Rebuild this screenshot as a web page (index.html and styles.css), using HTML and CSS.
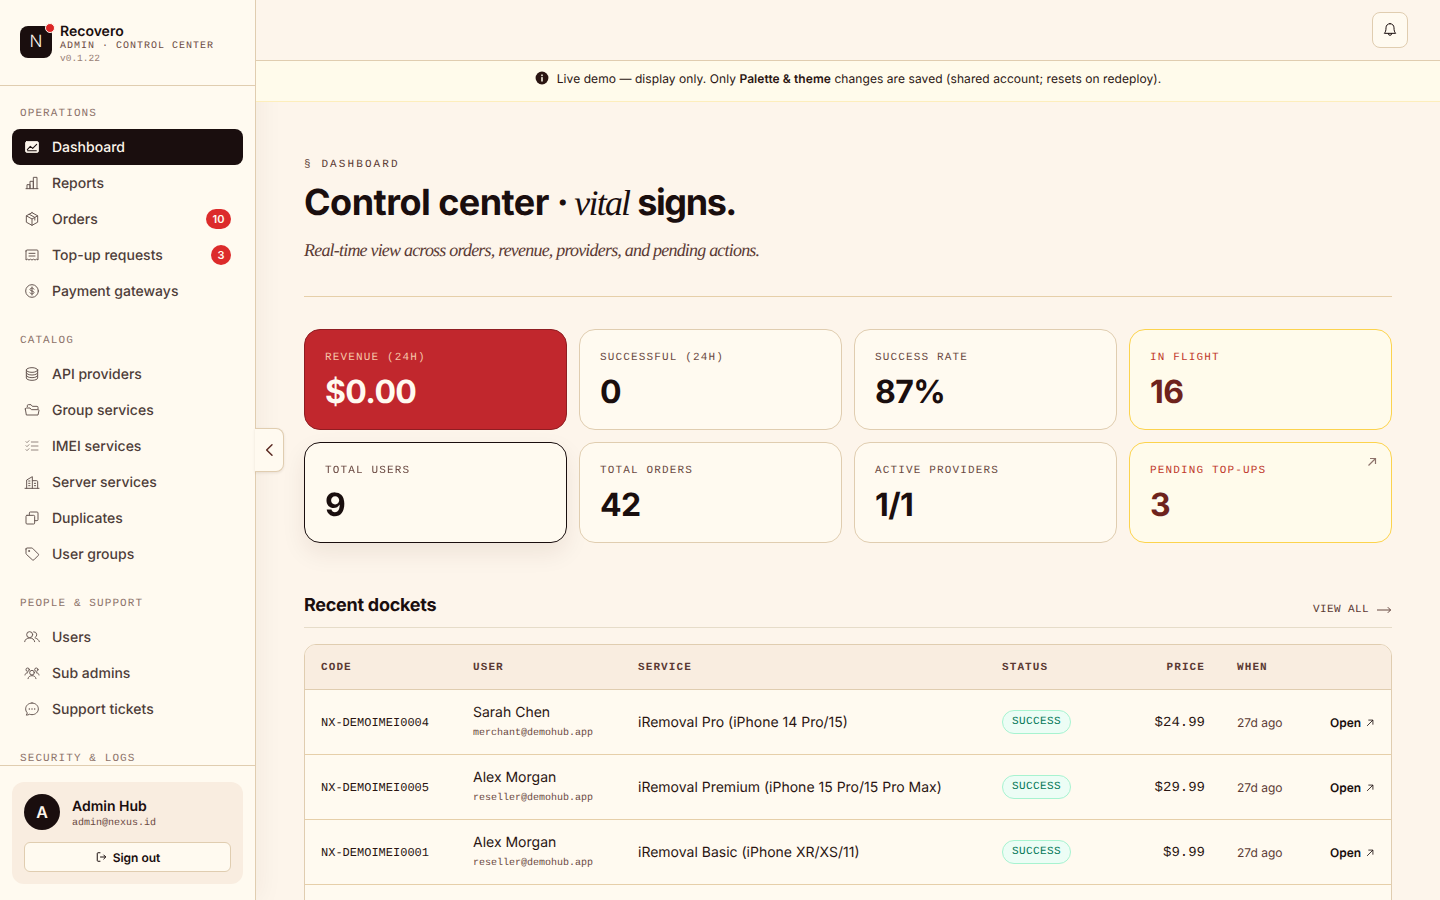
FILE: index.html
```html
<!DOCTYPE html>
<html lang="en">

<head>
    <meta charset="UTF-8">
    <meta name="viewport" content="width=device-width, initial-scale=1.0">
    <title>Recovero Admin</title>
    <link rel="stylesheet" href="styles.css">
</head>

<body>
    <aside class="sidebar">
        <div class="brand">
            <div class="brand_logo">N<span class="brand_dot"></span></div>
            <div class="brand_text">
                <p class="brand_name">Recovero</p>
                <p class="brand_sub">ADMIN · CONTROL CENTER</p>
                <p class="brand_ver">v0.1.22</p>
            </div>
        </div>

        <nav class="nav">
            <p class="nav_label">OPERATIONS</p>
            <a class="nav_item active">
                <svg class="ico" viewBox="0 0 24 24"><rect x="2.5" y="4" width="19" height="16" rx="1.5" fill="currentColor"/><path d="M5 16l4.500-5 3.500 3 6-6M5.500 17.500h13" stroke="#1a0e0e" stroke-width="1.6"/></svg>
                Dashboard
            </a>
            <a class="nav_item">
                <svg class="ico" viewBox="0 0 24 24"><path d="M3 20.500h18M4.500 20.500v-6h4.500v6M9 20.500V9.500h5v11M14 20.500V3.500h5.500v17"/></svg>
                Reports
            </a>
            <a class="nav_item">
                <svg class="ico" viewBox="0 0 24 24"><path d="M12 2.500l8.500 4.700v9.600L12 21.500l-8.500-4.700V7.200L12 2.500zM3.500 7.200L12 12l8.500-4.800M12 12v9.500M7.800 4.900l8.400 4.700v4"/></svg>
                Orders
                <span class="count wide">10</span>
            </a>
            <a class="nav_item">
                <svg class="ico" viewBox="0 0 24 24"><path d="M3 6a1.500 1.500 0 0 1 1.500-1.500h15A1.500 1.500 0 0 1 21 6v13.500l-2.200-1.200-2.200 1.200-2.300-1.200-2.300 1.200-2.300-1.200-2.200 1.200L5.200 18.300 3 19.500V6zM7.500 9.500h9M7.500 13.500h9"/></svg>
                Top-up requests
                <span class="count">3</span>
            </a>
            <a class="nav_item">
                <svg class="ico" viewBox="0 0 24 24"><circle cx="12" cy="12" r="9.500"/><path d="M15 9.200c-.5-1-1.600-1.500-3-1.500-1.700 0-3 .8-3 2.100 0 3 6 1.400 6 4.400 0 1.300-1.300 2.100-3 2.100-1.400 0-2.500-.5-3-1.500M12 6v12"/></svg>
                Payment gateways
            </a>

            <p class="nav_label next">CATALOG</p>
            <a class="nav_item">
                <svg class="ico" viewBox="0 0 24 24"><ellipse cx="12" cy="6" rx="8.500" ry="3.500"/><path d="M3.500 6v12c0 1.900 3.800 3.500 8.500 3.500s8.500-1.600 8.500-3.500V6M3.500 10c0 1.900 3.800 3.500 8.500 3.500s8.500-1.600 8.500-3.500M3.500 14c0 1.900 3.800 3.500 8.500 3.500s8.500-1.600 8.500-3.500"/></svg>
                API providers
            </a>
            <a class="nav_item">
                <svg class="ico" viewBox="0 0 24 24"><path d="M5 7V5.500A1.500 1.500 0 0 1 6.500 4h4l2 2.500h7A1.500 1.500 0 0 1 21 8v2"/><path d="M2 10.500A1.500 1.500 0 0 1 3.500 9H9l2 2.500h10.500A1 1 0 0 1 22.500 12.700L21 19.500H3.500L2 10.500z"/></svg>
                Group services
            </a>
            <a class="nav_item">
                <svg class="ico light" viewBox="0 0 24 24"><path d="M11 6h10M11 12h10M11 18h10M3 5.500l1.500 1.500L7.500 4M3 11.500L4.500 13l3-3M3 17.500L4.500 19l3-3"/></svg>
                IMEI services
            </a>
            <a class="nav_item">
                <svg class="ico" viewBox="0 0 24 24"><path d="M1.500 21.500h21M4 21.500V9L12.500 4v17.500M12.500 10h6.500a1.500 1.500 0 0 1 1.500 1.500v10M7 10.500h2M7 14h2M7 17.500h2M15.500 14h2M15.500 17.500h2"/></svg>
                Server services
            </a>
            <a class="nav_item">
                <svg class="ico" viewBox="0 0 24 24"><rect x="3" y="8" width="13" height="13" rx="1.500"/><path d="M8 8V4.500A1.500 1.500 0 0 1 9.500 3h10A1.500 1.500 0 0 1 21 4.500v10a1.500 1.500 0 0 1-1.500 1.500H16"/></svg>
                Duplicates
            </a>
            <a class="nav_item">
                <svg class="ico" viewBox="0 0 24 24"><path d="M3 4.500A1.500 1.500 0 0 1 4.500 3h7.200c.5 0 .9.200 1.200.500l8.400 8.400a1.700 1.700 0 0 1 0 2.400l-6.400 6.400a1.700 1.700 0 0 1-2.400 0L3.500 12.400a1.700 1.700 0 0 1-.5-1.200V4.500z"/><circle cx="7.500" cy="7.500" r=".8"/></svg>
                User groups
            </a>

            <p class="nav_label next">PEOPLE &amp; SUPPORT</p>
            <a class="nav_item">
                <svg class="ico" viewBox="0 0 24 24"><circle cx="8.500" cy="8.500" r="4.500"/><path d="M1 19c.6-3.500 3.500-5.500 7.500-5.500s6.900 2 7.500 5.500M14.500 4.200a4.500 4.500 0 0 1 2 8.600M17.500 13.800c2.800.8 4.800 2.600 5.500 5.200"/></svg>
                Users
            </a>
            <a class="nav_item">
                <svg class="ico" viewBox="0 0 24 24"><circle cx="12" cy="11.500" r="3.500"/><circle cx="5.500" cy="7" r="2.500"/><circle cx="18.500" cy="7" r="2.500"/><path d="M6 20.500c.5-3 3-4.500 6-4.500s5.500 1.500 6 4.500M1.500 15c.3-2 1.800-3.500 4-3.500M22.500 15c-.3-2-1.800-3.500-4-3.500"/></svg>
                Sub admins
            </a>
            <a class="nav_item">
                <svg class="ico" viewBox="0 0 24 24"><path d="M12 3c5.200 0 9.500 3.900 9.500 8.800s-4.300 8.700-9.500 8.700c-1.300 0-2.500-.2-3.600-.7-1.500 1-3.300 1.400-5.200 1.300 1-.9 1.600-2 1.700-3.300-1.500-1.600-2.400-3.700-2.400-6C2.500 6.900 6.800 3 12 3z"/><path d="M8 12h.01M12 12h.01M16 12h.01" stroke-width="2.200"/></svg>
                Support tickets
            </a>

            <p class="nav_label next">SECURITY &amp; LOGS</p>
        </nav>

        <div class="side_foot">
            <div class="user_card">
                <div class="user_row">
                    <div class="avatar">A</div>
                    <div class="user_text">
                        <p class="user_name">Admin Hub</p>
                        <p class="user_mail">admin@nexus.id</p>
                    </div>
                </div>
                <button class="signout">
                    <svg viewBox="0 0 24 24"><path d="M10 3.500H6A1.500 1.500 0 0 0 4.500 5v14A1.500 1.500 0 0 0 6 20.500h4M11 12h10M17.500 8l4 4-4 4"/></svg>
                    Sign out
                </button>
            </div>
        </div>
    </aside>

    <button class="collapse">
        <svg viewBox="0 0 24 24"><path d="M15 4l-8 8 8 8"/></svg>
    </button>

    <main class="main">
        <div class="topbar">
            <button class="bell">
                <svg viewBox="0 0 24 24"><path d="M12 2.500c-3.600 0-6 2.700-6 6.200 0 4.300-.8 6.400-2.500 8.300h17c-1.700-1.900-2.500-4-2.500-8.300 0-3.500-2.400-6.200-6-6.200zM9.500 17.500a2.500 2.500 0 0 0 5 0"/></svg>
            </button>
        </div>
        <div class="banner">
            <svg class="banner_ico" viewBox="0 0 24 24"><circle cx="12" cy="12" r="11" fill="#2a1512"/><rect x="10.700" y="10.500" width="2.600" height="7.500" fill="#fffbeb"/><rect x="10.700" y="6" width="2.600" height="2.800" fill="#fffbeb"/></svg>
            <span>Live demo — display only. Only <b>Palette &amp; theme</b> changes are saved (shared account; resets on redeploy).</span>
        </div>

        <div class="content">
            <p class="eyebrow">§ DASHBOARD</p>
            <h1 class="title">Control center · <em>vital</em> <span class="title_end">signs.</span></h1>
            <p class="subtitle">Real-time view across orders, revenue, providers, and pending actions.</p>
            <hr class="rule">

            <section class="stats">
                <div class="stat red">
                    <p class="stat_label">REVENUE (24H)</p>
                    <p class="stat_value">$0.00</p>
                </div>
                <div class="stat">
                    <p class="stat_label">SUCCESSFUL (24H)</p>
                    <p class="stat_value">0</p>
                </div>
                <div class="stat">
                    <p class="stat_label">SUCCESS RATE</p>
                    <p class="stat_value">87%</p>
                </div>
                <div class="stat amber">
                    <p class="stat_label">IN FLIGHT</p>
                    <p class="stat_value">16</p>
                </div>
                <div class="stat hover">
                    <p class="stat_label">TOTAL USERS</p>
                    <p class="stat_value">9</p>
                </div>
                <div class="stat">
                    <p class="stat_label">TOTAL ORDERS</p>
                    <p class="stat_value">42</p>
                </div>
                <div class="stat">
                    <p class="stat_label">ACTIVE PROVIDERS</p>
                    <p class="stat_value">1/1</p>
                </div>
                <div class="stat amber">
                    <p class="stat_label">PENDING TOP-UPS</p>
                    <p class="stat_value">3</p>
                    <svg class="stat_arrow" viewBox="0 0 24 24"><path d="M5 19L19 5M8 5h11v11"/></svg>
                </div>
            </section>

            <div class="section_head">
                <h2>Recent dockets</h2>
                <a class="view_all">VIEW ALL <svg viewBox="0 0 16 8"><path d="M0 4h14.500M11.500 1l3 3-3 3"/></svg></a>
            </div>

            <div class="table_wrap">
                <table class="dockets">
                    <thead>
                        <tr>
                            <th class="c_code">CODE</th>
                            <th class="c_user">USER</th>
                            <th class="c_service">SERVICE</th>
                            <th class="c_status">STATUS</th>
                            <th class="c_price">PRICE</th>
                            <th class="c_when">WHEN</th>
                            <th class="c_open"></th>
                        </tr>
                    </thead>
                    <tbody>
                        <tr>
                            <td class="code">NX-DEMOIMEI0004</td>
                            <td><p class="u_name">Sarah Chen</p><p class="u_mail">merchant@demohub.app</p></td>
                            <td>iRemoval Pro (iPhone 14 Pro/15)</td>
                            <td><span class="pill">SUCCESS</span></td>
                            <td class="price">$24.99</td>
                            <td class="when">27d ago</td>
                            <td class="open">Open <svg viewBox="0 0 24 24"><path d="M5 19L19 5M8 5h11v11"/></svg></td>
                        </tr>
                        <tr>
                            <td class="code">NX-DEMOIMEI0005</td>
                            <td><p class="u_name">Alex Morgan</p><p class="u_mail">reseller@demohub.app</p></td>
                            <td>iRemoval Premium (iPhone 15 Pro/15 Pro Max)</td>
                            <td><span class="pill">SUCCESS</span></td>
                            <td class="price">$29.99</td>
                            <td class="when">27d ago</td>
                            <td class="open">Open <svg viewBox="0 0 24 24"><path d="M5 19L19 5M8 5h11v11"/></svg></td>
                        </tr>
                        <tr>
                            <td class="code">NX-DEMOIMEI0001</td>
                            <td><p class="u_name">Alex Morgan</p><p class="u_mail">reseller@demohub.app</p></td>
                            <td>iRemoval Basic (iPhone XR/XS/11)</td>
                            <td><span class="pill">SUCCESS</span></td>
                            <td class="price">$9.99</td>
                            <td class="when">27d ago</td>
                            <td class="open">Open <svg viewBox="0 0 24 24"><path d="M5 19L19 5M8 5h11v11"/></svg></td>
                        </tr>
                        <tr class="empty"><td colspan="7"></td></tr>
                    </tbody>
                </table>
            </div>
        </div>
    </main>
</body>
</html>
```

FILE: styles.css
```css
* {
    box-sizing: border-box;
    margin: 0;
    padding: 0;
}

body {
    display: flex;
    height: 100vh;
    overflow: hidden;
    background-color: #fdf5eb;
    color: #1a0e0e;
    font-family: "Inter", sans-serif;
    text-rendering: geometricPrecision;
}

button {
    font-family: inherit;
    text-rendering: inherit;
    cursor: pointer;
}

.sidebar {
    display: flex;
    flex-direction: column;
    flex: none;
    width: 256px;
    height: 100vh;
    background-color: #fffaf0;
    border-right: 1px solid #e0cdb0;
    box-shadow: 4px 0 24px rgba(60, 30, 10, 0.05);
}

.brand {
    display: flex;
    flex: none;
    align-items: center;
    gap: 8px;
    height: 86px;
    padding: 0 20px;
    border-bottom: 1px solid #e0cdb0;
}

.brand_logo {
    position: relative;
    display: flex;
    flex: none;
    width: 32px;
    height: 32px;
    margin-top: -1px;
    align-items: center;
    justify-content: center;
    background-color: #1a0e0e;
    border-radius: 8px;
    color: #fdf5eb;
    font-size: 17px;
    font-weight: 300;
}

.brand_dot {
    position: absolute;
    top: -3px;
    right: -3px;
    width: 10px;
    height: 10px;
    background-color: #dc2626;
    border: 1px solid #fffaf0;
    border-radius: 50%;
}

.brand_text {
    margin-top: 2px;
}

.brand_name {
    margin-top: 1px;
    font-size: 14px;
    font-weight: 600;
    line-height: 16px;
}

.brand_sub {
    font-family: "Liberation Mono", monospace;
    font-size: 10px;
    letter-spacing: 1px;
    line-height: 13px;
    color: #6b4a43;
}

.brand_ver {
    margin-top: -1px;
    font-family: "Liberation Mono", monospace;
    font-size: 9.5px;
    letter-spacing: 0;
    line-height: 13px;
    color: #9a7f76;
}

.nav {
    flex: 1;
    overflow: hidden;
    padding: 20px 12px 0 12px;
}

.nav_label {
    height: 15px;
    margin: 0 0 8px 8px;
    font-family: "Liberation Mono", monospace;
    font-size: 11px;
    letter-spacing: 1.1px;
    line-height: 17px;
    color: #8d736b;
}

.nav_label.next {
    margin-top: 24px;
}

.nav_item {
    display: flex;
    align-items: center;
    gap: 12px;
    height: 36px;
    padding: 0 12px;
    border-radius: 8px;
    font-size: 14px;
    font-weight: 500;
    color: #4e3d39;
}

.nav_item.active {
    background-color: #1a0e0e;
    color: #fdf5eb;
}

.ico {
    flex: none;
    width: 16px;
    height: 16px;
    fill: none;
    stroke: currentColor;
    stroke-width: 1.5;
    stroke-linecap: round;
    stroke-linejoin: round;
    opacity: 0.85;
}

.active .ico {
    opacity: 1;
}

.ico.light {
    opacity: 0.6;
}

.count {
    display: flex;
    width: 20px;
    height: 20px;
    margin-left: auto;
    align-items: center;
    justify-content: center;
    background-color: #dc2b2b;
    border-radius: 10px;
    color: #fffaf0;
    font-size: 11px;
    font-weight: 600;
}

.count.wide {
    width: 25px;
}

.side_foot {
    flex: none;
    padding: 16px 12px;
    border-top: 1px solid #e0cdb0;
}

.user_card {
    padding: 12px;
    background-color: #f9ede0;
    border-radius: 12px;
}

.user_row {
    display: flex;
    height: 36px;
    align-items: flex-start;
    gap: 12px;
    margin-bottom: 12px;
}

.avatar {
    display: flex;
    width: 36px;
    height: 36px;
    align-items: center;
    justify-content: center;
    background-color: #1a0e0e;
    border-radius: 50%;
    color: #fdf5eb;
    font-size: 16px;
    font-weight: 600;
}

.user_text {
    padding-top: 4px;
}

.user_name {
    font-size: 14px;
    font-weight: 600;
    line-height: 17px;
}

.user_mail {
    margin-top: 2px;
    font-family: "Liberation Mono", monospace;
    font-size: 10px;
    line-height: 14px;
    color: #6b4a43;
}

.signout {
    display: flex;
    width: 100%;
    height: 30px;
    align-items: center;
    justify-content: center;
    gap: 6px;
    background-color: #fffaf0;
    border: 1px solid #e0cdb0;
    border-radius: 6px;
    color: #1a0e0e;
    font-size: 12px;
    font-weight: 600;
}

.signout svg {
    width: 12px;
    height: 12px;
    fill: none;
    stroke: currentColor;
    stroke-width: 2;
    stroke-linecap: round;
    stroke-linejoin: round;
}

.collapse {
    position: fixed;
    top: 428px;
    left: 255px;
    display: flex;
    width: 29px;
    height: 44px;
    padding-left: 2px;
    align-items: center;
    justify-content: center;
    background-color: #fffaf0;
    border: 1px solid #e0cdb0;
    border-left: none;
    border-radius: 0 8px 8px 0;
    box-shadow: 0 1px 3px rgba(60, 30, 10, 0.1);
    color: #5b2a22;
}

.collapse svg {
    width: 16px;
    height: 16px;
    fill: none;
    stroke: currentColor;
    stroke-width: 2.2;
    stroke-linecap: round;
    stroke-linejoin: round;
}

.main {
    flex: 1;
    min-width: 0;
    height: 100vh;
    overflow: hidden;
}

.topbar {
    display: flex;
    height: 61px;
    align-items: center;
    justify-content: flex-end;
    padding: 0 32px;
    background-color: #fdf5eb;
    border-bottom: 1px solid #e0cdb0;
}

.bell {
    display: flex;
    width: 36px;
    height: 36px;
    align-items: center;
    justify-content: center;
    background-color: #fffaf0;
    border: 1px solid #e0cdb0;
    border-radius: 8px;
    color: #1a0e0e;
}

.bell svg {
    width: 16px;
    height: 16px;
    fill: none;
    stroke: currentColor;
    stroke-width: 1.5;
    stroke-linecap: round;
    stroke-linejoin: round;
}

.banner {
    display: flex;
    height: 41px;
    padding-bottom: 6px;
    align-items: center;
    justify-content: center;
    gap: 8px;
    background-color: #fffbeb;
    border-bottom: 1px solid #fdeebc;
    font-size: 12px;
    letter-spacing: 0.07px;
    color: #2a1512;
}

.banner b {
    font-weight: 600;
}

.banner_ico {
    width: 14px;
    height: 14px;
}

.content {
    padding: 56px 48px 0 48px;
}

.eyebrow {
    font-family: "Liberation Mono", monospace;
    font-size: 11px;
    letter-spacing: 2.1px;
    line-height: 15px;
    color: #5b3a34;
}

.title {
    margin-top: 9px;
    font-size: 36px;
    font-weight: 700;
    line-height: 40px;
    letter-spacing: -0.015em;
}

.title em {
    margin-left: -2px;
    font-family: "Liberation Serif", serif;
    font-weight: 400;
    letter-spacing: -0.05em;
}

.title_end {
    letter-spacing: -0.04em;
}

.subtitle {
    margin-top: 15px;
    font-family: "Liberation Serif", serif;
    font-size: 18px;
    font-style: italic;
    letter-spacing: -0.8px;
    line-height: 24px;
    color: #5b3a34;
}

.rule {
    height: 1px;
    margin-top: 34px;
    background-color: #e6cfa9;
    border: none;
}

.stats {
    display: grid;
    grid-template-columns: repeat(4, 1fr);
    gap: 12px;
    margin-top: 32px;
}

.stat {
    position: relative;
    height: 101px;
    padding: 21px 20px 20px 20px;
    background-color: #fffaf0;
    border: 1px solid #e0cdb0;
    border-radius: 16px;
}

.stat_label {
    font-family: "Liberation Mono", monospace;
    font-size: 11px;
    letter-spacing: 1.15px;
    line-height: 15px;
    color: #6b4a43;
}

.stat_value {
    margin-top: 6px;
    font-size: 32px;
    font-weight: 700;
    line-height: 40px;
    letter-spacing: -0.02em;
}

.stat.red {
    background-color: #c1272d;
    border-color: #8f1d22;
    color: #fffaf0;
}

.stat.red .stat_label {
    color: #f6c5a8;
}

.stat.hover {
    border-color: #1a0e0e;
    box-shadow: 0 10px 24px rgba(60, 30, 10, 0.08);
}

.stat.amber {
    background-color: #fffbeb;
    border-color: #fcd34d;
}

.stat.amber .stat_label {
    color: #c0392b;
}

.stat.amber .stat_value {
    color: #6e231c;
}

.stat_arrow {
    position: absolute;
    top: 13px;
    right: 13px;
    width: 12px;
    height: 12px;
    fill: none;
    stroke: #8d736b;
    stroke-width: 2.4;
}

.section_head {
    display: flex;
    height: 53px;
    margin-top: 32px;
    align-items: flex-end;
    justify-content: space-between;
    padding-bottom: 10px;
    border-bottom: 1px solid #e6dcc9;
}

.section_head h2 {
    font-size: 18px;
    font-weight: 700;
    line-height: 22px;
    letter-spacing: -0.015em;
}

.view_all {
    display: flex;
    align-items: center;
    gap: 8px;
    font-family: "Liberation Mono", monospace;
    font-size: 11px;
    letter-spacing: 0.4px;
    line-height: 13px;
    color: #5b3a34;
}

.view_all svg {
    width: 15px;
    height: 8px;
    margin-top: -2px;
    fill: none;
    stroke: currentColor;
}

.table_wrap {
    margin-top: 16px;
    background-color: #fffaf0;
    border: 1px solid #e0cdb0;
    border-radius: 12px;
    overflow: hidden;
}

.dockets {
    width: 100%;
    table-layout: fixed;
    border-collapse: collapse;
    font-size: 14px;
}

.dockets th {
    height: 44px;
    padding: 2px 16px 0 16px;
    background-color: #f9ede0;
    border-bottom: 1px solid #e0cdb0;
    font-family: "Liberation Mono", monospace;
    font-size: 11px;
    font-weight: 700;
    letter-spacing: 1.1px;
    text-align: left;
    color: #5b3a34;
}

.dockets td {
    height: 65px;
    padding: 2px 16px 0 16px;
    border-bottom: 1px solid #e6cfa9;
    color: #2a1512;
}

.c_code { width: 152px; }
.c_user { width: 165px; }
.c_service { width: 364px; }
.c_status { width: 124px; }
.c_price { width: 111px; text-align: right !important; }
.c_when { width: 93px; }

.dockets .code {
    font-family: "Liberation Mono", monospace;
    font-size: 12px;
}

.u_name {
    font-size: 14px;
    line-height: 20px;
}

.u_mail {
    margin-top: 3px;
    font-family: "Liberation Mono", monospace;
    font-size: 10px;
    line-height: 16px;
    color: #6b4a43;
}

.pill {
    display: inline-block;
    height: 24px;
    margin-top: -2px;
    padding: 0 9px;
    background-color: #ecfdf5;
    border: 1px solid #a7f3d0;
    border-radius: 12px;
    font-family: "Liberation Mono", monospace;
    font-size: 11px;
    letter-spacing: 0.4px;
    line-height: 22px;
    color: #047857;
}

.dockets .price {
    font-family: "Liberation Mono", monospace;
    font-size: 14px;
    text-align: right;
}

.dockets .when {
    font-size: 12px;
    color: #5b3a34;
}

.dockets .open {
    font-size: 12px;
    font-weight: 600;
    text-align: right;
    white-space: nowrap;
    color: #1a0e0e;
}

.open svg {
    width: 10px;
    height: 10px;
    margin-left: 1px;
    vertical-align: -1px;
    fill: none;
    stroke: currentColor;
    stroke-width: 2;
}
```
